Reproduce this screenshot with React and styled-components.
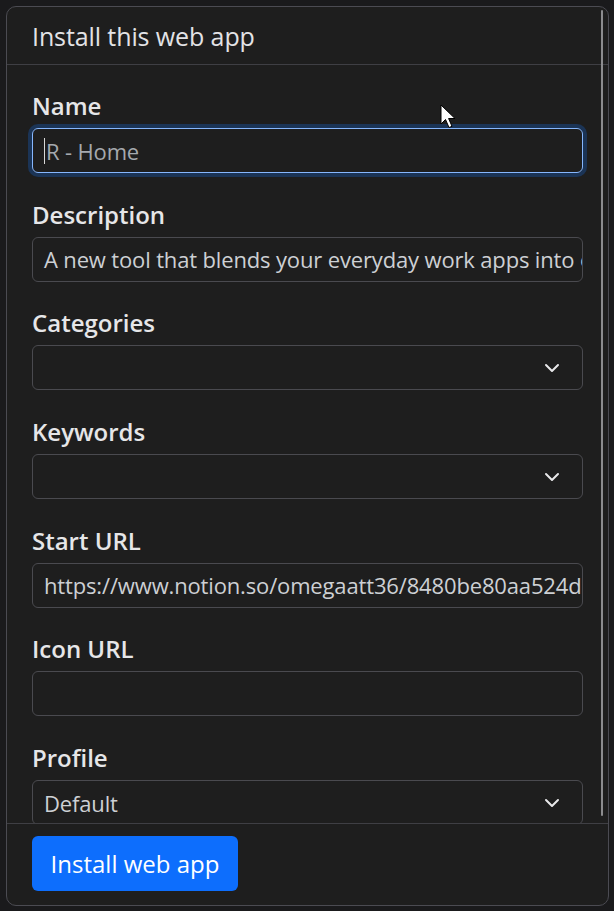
import React from 'react';
import styled, { createGlobalStyle } from 'styled-components';

const GlobalStyle = createGlobalStyle`
  html, body {
    margin: 0;
    padding: 0;
    background: #1a1a1c;
    font-family: "Open Sans", "Noto Sans", sans-serif;
  }
`;

const Page = styled.div`
  position: relative;
  width: 614px;
  height: 911px;
  padding: 6px 5px 5px 6px;
  box-sizing: border-box;
  overflow: hidden;
`;

const Dialog = styled.div`
  position: relative;
  height: 100%;
  display: flex;
  flex-direction: column;
  background: #1e1e1e;
  border: 1px solid #4b4b52;
  border-radius: 10px;
  box-sizing: border-box;
  overflow: hidden;
`;

const Header = styled.div`
  height: 57px;
  flex: none;
  display: flex;
  align-items: center;
  padding: 0 25px;
  border-bottom: 1px solid #3f3f44;
`;

const Title = styled.h5`
  margin: 0;
  font-size: 25px;
  font-weight: 400;
  color: #e3e3e6;
  letter-spacing: -0.1px;
`;

const Body = styled.div`
  flex: 1;
  overflow: hidden;
  padding: 27px 25px 0;
  display: flex;
  flex-direction: column;
  gap: 27.7px;
`;

const Group = styled.div`
  display: flex;
  flex-direction: column;
  gap: 8px;
`;

const Label = styled.label`
  font-size: 24px;
  line-height: 28px;
  font-weight: 600;
  color: #e6e6e8;
`;

const Field = styled.div`
  position: relative;
  height: 45px;
  flex: none;
  box-sizing: border-box;
  display: flex;
  align-items: center;
  padding: 0 11px;
  border: 1px solid ${(p) => (p.focused ? '#86b7fe' : '#4a4a4f')};
  border-radius: 6px;
  box-shadow: ${(p) => (p.focused ? '0 0 0 4px #1b3456' : 'none')};
  color: ${(p) => (p.dim ? '#a5a9ae' : '#cdd0d4')};
  font-size: 22px;
  white-space: nowrap;
  overflow: hidden;
  letter-spacing: -0.15px;
`;

const Caret = styled.span`
  display: inline-block;
  width: 1px;
  height: 26px;
  background: #d8d8d8;
  margin-right: 1px;
`;

const Chevron = styled.svg`
  position: absolute;
  right: 22px;
  top: 50%;
  margin-top: -8px;
  width: 16px;
  height: 16px;
`;

const Footer = styled.div`
  flex: none;
  height: 82px;
  box-sizing: border-box;
  border-top: 1px solid #3f3f44;
  padding: 12px 25px 0;
`;

const PrimaryButton = styled.button`
  height: 55px;
  width: 206px;
  padding: 0;
  border: none;
  border-radius: 6px;
  background: #0d6efd;
  color: #ffffff;
  font-family: inherit;
  font-size: 24px;
  cursor: pointer;
`;

const Scrollbar = styled.div`
  position: absolute;
  right: 5px;
  top: 3px;
  width: 2px;
  height: 806px;
  background: #8c8c8f;
  border-radius: 1px;
`;

const Pointer = styled.svg`
  position: absolute;
  left: 440px;
  top: 104px;
  width: 17px;
  height: 26px;
`;

const ChevronIcon = () => (
  <Chevron viewBox="0 0 16 16">
    <path d="m2 5 6 6 6-6" fill="none" stroke="#e8e8ea" strokeWidth="2" strokeLinecap="round" strokeLinejoin="round" />
  </Chevron>
);

const fields = [
  { label: 'Name', value: 'R - Home', focused: true, caret: true, dim: true },
  { label: 'Description', value: 'A new tool that blends your everyday work apps into one. It\u2019s the all-in-one workspace' },
  { label: 'Categories', value: '', select: true },
  { label: 'Keywords', value: '', select: true },
  { label: 'Start URL', value: 'https://www.notion.so/omegaatt36/8480be80aa524d1f9b' },
  { label: 'Icon URL', value: '' },
  { label: 'Profile', value: 'Default', select: true },
];

const App = () => (
  <>
    <GlobalStyle />
    <Page>
      <Dialog>
        <Header>
          <Title>Install this web app</Title>
        </Header>
        <Body>
          {fields.map((f) => (
            <Group key={f.label}>
              <Label>{f.label}</Label>
              <Field focused={f.focused} dim={f.dim}>
                {f.caret && <Caret />}
                {f.value}
                {f.select && <ChevronIcon />}
              </Field>
            </Group>
          ))}
        </Body>
        <Footer>
          <PrimaryButton>Install web app</PrimaryButton>
        </Footer>
        <Scrollbar />
      </Dialog>
      <Pointer viewBox="0 0 17 26">
        <path d="M1 1 L1 20 L5.5 15.5 L9 23.5 L12 22.3 L8.6 14.5 L15 14.5 Z" fill="#ffffff" stroke="#000000" strokeWidth="1" strokeLinejoin="round" />
      </Pointer>
    </Page>
  </>
);

export default App;
